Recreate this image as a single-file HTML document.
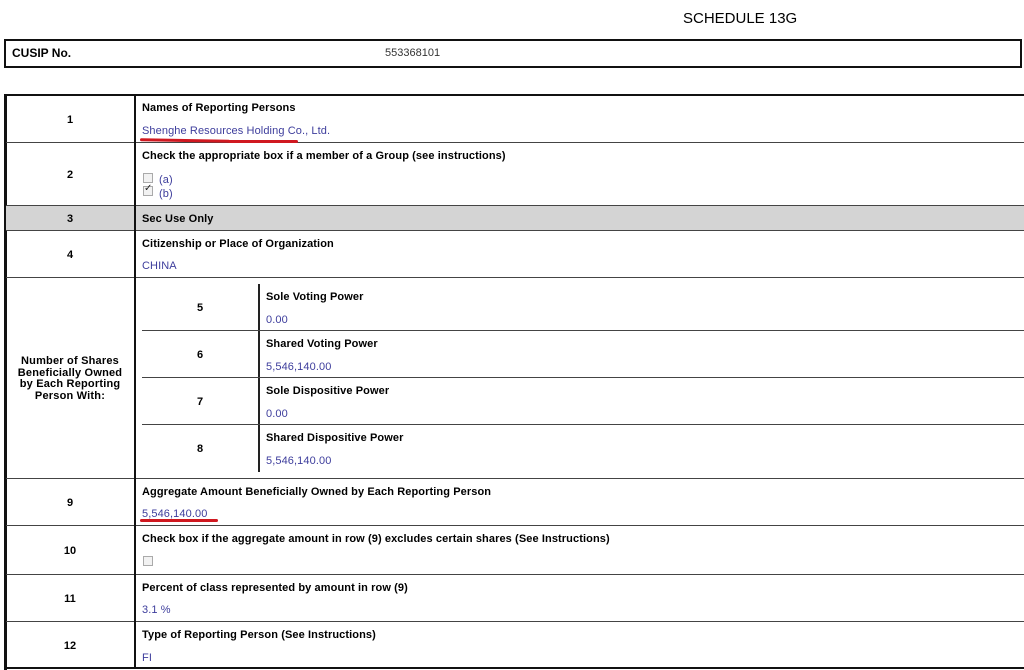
<!DOCTYPE html>
<html><head><meta charset="utf-8"><style>
*{margin:0;padding:0;box-sizing:border-box}
body{width:1024px;height:670px;background:#fff;position:relative;overflow:hidden;font-family:"Liberation Sans",Arial,sans-serif;color:#000}
.a{position:absolute;white-space:nowrap}
.b{font-weight:bold;font-size:11px;letter-spacing:0.1px}
.v{font-size:11px;color:#3d3d9c;letter-spacing:0.1px}
.h{position:absolute;left:6px;right:0;height:1px;background:#444}
.ih{position:absolute;left:142px;right:0;height:1px;background:#444}
.n{position:absolute;left:6px;width:128px;text-align:center;font-weight:bold;font-size:11px}
.in{position:absolute;left:142px;width:116px;text-align:center;font-weight:bold;font-size:11px}
.cb{position:absolute;width:10px;height:10px;border:1px solid #aaa;background:#f2f2f2}
.t{margin-top:1px}
</style></head><body>
<div class="a" style="left:683px;top:10px;font-size:15px;">SCHEDULE 13G</div>
<div class="a" style="left:4px;top:39px;width:1018px;height:29px;border:2px solid #111"></div>
<div class="a b" style="left:12px;top:46px;font-size:12px;letter-spacing:0">CUSIP No.</div>
<div class="a" style="left:385px;top:47px;font-size:11px;color:#333">553368101</div>

<div class="a" style="left:4px;top:94px;width:1020px;height:2px;background:#111"></div>
<div class="a" style="left:4px;top:94px;width:3px;height:576px;background:#111"></div>
<div class="a" style="left:4px;top:667px;width:1020px;height:2px;background:#111"></div>
<div class="a" style="left:6px;top:205px;width:1018px;height:25px;background:#d4d4d4"></div>
<div class="h" style="top:142px"></div>
<div class="h" style="top:205px"></div>
<div class="h" style="top:230px"></div>
<div class="h" style="top:277px"></div>
<div class="h" style="top:478px"></div>
<div class="h" style="top:525px"></div>
<div class="h" style="top:574px"></div>
<div class="h" style="top:621px"></div>
<div class="a" style="left:134px;top:94px;width:2px;height:575px;background:#111"></div>

<div class="n" style="top:114px">1</div>
<div class="a b" style="left:142px;top:102px">Names of Reporting Persons</div>
<div class="a v" style="left:142px;top:125px">Shenghe Resources Holding Co., Ltd.</div>
<div class="a" style="left:140px;top:139px;width:90px;height:3px;background:#d01820;border-radius:2px;transform:rotate(1deg)"></div>
<div class="a" style="left:228px;top:140px;width:70px;height:3px;background:#d01820;border-radius:2px"></div>

<div class="n" style="top:169px">2</div>
<div class="a b" style="left:142px;top:150px">Check the appropriate box if a member of a Group (see instructions)</div>
<div class="cb" style="left:143px;top:173px"></div>
<div class="a v" style="left:159px;top:174px">(a)</div>
<div class="cb" style="left:143px;top:186px"></div>
<div class="a" style="left:144px;top:183px;font-size:10px;color:#222">✓</div>
<div class="a v" style="left:159px;top:188px">(b)</div>

<div class="n" style="top:213px">3</div>
<div class="a b" style="left:142px;top:213px">Sec Use Only</div>

<div class="n" style="top:249px">4</div>
<div class="a b" style="left:142px;top:238px">Citizenship or Place of Organization</div>
<div class="a v" style="left:142px;top:260px">CHINA</div>

<div class="n" style="top:356px;line-height:11.5px;white-space:normal;padding:0 8px;letter-spacing:0.2px">Number of Shares Beneficially Owned by Each Reporting Person With:</div>

<div class="a" style="left:258px;top:284px;width:2px;height:188px;background:#222"></div>
<div class="ih" style="top:330px"></div>
<div class="ih" style="top:377px"></div>
<div class="ih" style="top:424px"></div>
<div class="in" style="top:302px">5</div>
<div class="a b" style="left:266px;top:291px">Sole Voting Power</div>
<div class="a v" style="left:266px;top:314px">0.00</div>
<div class="in" style="top:349px">6</div>
<div class="a b" style="left:266px;top:338px">Shared Voting Power</div>
<div class="a v" style="left:266px;top:361px">5,546,140.00</div>
<div class="in" style="top:396px">7</div>
<div class="a b" style="left:266px;top:385px">Sole Dispositive Power</div>
<div class="a v" style="left:266px;top:408px">0.00</div>
<div class="in" style="top:443px">8</div>
<div class="a b" style="left:266px;top:432px">Shared Dispositive Power</div>
<div class="a v" style="left:266px;top:455px">5,546,140.00</div>

<div class="n" style="top:497px">9</div>
<div class="a b" style="left:142px;top:486px">Aggregate Amount Beneficially Owned by Each Reporting Person</div>
<div class="a v" style="left:142px;top:508px">5,546,140.00</div>
<div class="a" style="left:140px;top:519px;width:78px;height:3px;background:#d01820;border-radius:2px"></div>

<div class="n" style="top:545px">10</div>
<div class="a b" style="left:142px;top:533px">Check box if the aggregate amount in row (9) excludes certain shares (See Instructions)</div>
<div class="cb" style="left:143px;top:556px"></div>

<div class="n" style="top:593px">11</div>
<div class="a b" style="left:142px;top:582px">Percent of class represented by amount in row (9)</div>
<div class="a v" style="left:142px;top:604px">3.1 %</div>

<div class="n" style="top:640px">12</div>
<div class="a b" style="left:142px;top:629px">Type of Reporting Person (See Instructions)</div>
<div class="a v" style="left:142px;top:652px">FI</div>
</body></html>
